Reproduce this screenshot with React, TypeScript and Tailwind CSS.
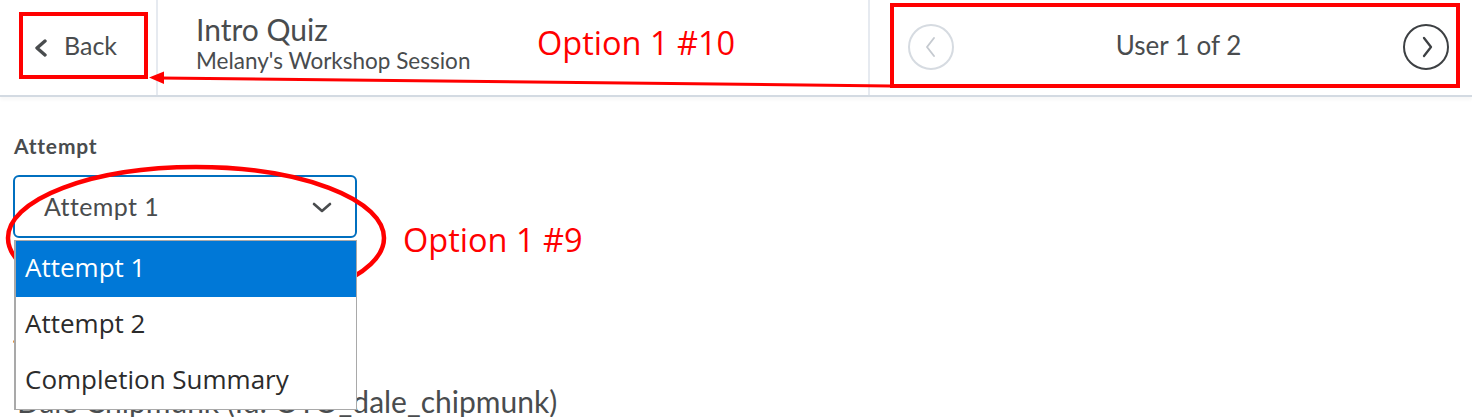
import React from "react";

function Chev({ points, w, h, stroke, className }: { points: string; w: number; h: number; stroke: number; className?: string }) {
  return (
    <svg width={w} height={h} viewBox={`0 0 ${w} ${h}`} className={className} fill="none">
      <polyline points={points} stroke="currentColor" strokeLinecap="round" strokeLinejoin="round" strokeWidth={stroke} />
    </svg>
  );
}

function Annotations() {
  return (
    <>
      <svg className="pointer-events-none absolute left-0 top-0" width="1472" height="417" viewBox="0 0 1472 417">
        <rect x="21" y="14" width="125" height="63" fill="none" stroke="#ff0000" strokeWidth="4" />
        <rect x="892" y="5" width="566" height="81" fill="none" stroke="#ff0000" strokeWidth="4" />
        <line x1="891" y1="86" x2="160" y2="78" stroke="#ff0000" strokeWidth="3" />
        <polygon points="149,77.5 164,71.5 164,84" fill="#ff0000" />
        <ellipse cx="196" cy="238" rx="188" ry="71" fill="none" stroke="#ff0000" strokeWidth="4.5" />
      </svg>
      <div className="pointer-events-none absolute left-[537px] top-[27px] text-[32.5px] leading-none text-[#ff0000] font-['Open_Sans',sans-serif]">
        Option 1 #10
      </div>
      <div className="pointer-events-none absolute left-[403px] top-[224px] text-[32.5px] leading-none text-[#ff0000] font-['Open_Sans',sans-serif]">
        Option 1 #9
      </div>
    </>
  );
}

export default function App() {
  const options = ["Attempt 1", "Attempt 2", "Completion Summary"];
  return (
    <div className="relative h-[417px] w-[1472px] overflow-hidden bg-white font-['Lato',sans-serif] text-[#494c4e]">
      <header className="flex h-[97px] border-b-2 border-[#d3dae2] shadow-[0_3px_3px_rgba(0,0,0,0.03)]">
        <div className="flex w-[158px] items-start gap-[16px] border-r-2 border-[#e6eaf0] pl-[34px] pt-[30px]">
          <Chev points="11,2 3,9 11,16" w={14} h={18} stroke={3.4} className="mt-[9px] text-[#494c4e]" />
          <span className="text-[25px] leading-[30px]">Back</span>
        </div>
        <div className="flex flex-1 flex-col border-r-2 border-[#e6eaf0] pl-[38px] pt-[12px]">
          <span className="text-[30px] leading-[35px]">Intro Quiz</span>
          <span className="mt-[1px] text-[22.5px] leading-[26px]">Melany's Workshop Session</span>
        </div>
        <div className="flex w-[602px] items-center justify-between pb-[1px] pl-[38px] pr-[23px]">
          <div className="flex h-[46px] w-[46px] items-center justify-center rounded-full border-2 border-[#d6dbe1]">
            <Chev points="10,2 3,11 10,20" w={13} h={22} stroke={1.9} className="mr-[2px] text-[#c5cad0]" />
          </div>
          <span className="mb-[4px] text-[26px] leading-[31px]">User 1 of 2</span>
          <div className="flex h-[46px] w-[46px] items-center justify-center rounded-full border-2 border-[#3d4043]">
            <Chev points="3,2 10,11 3,20" w={13} h={22} stroke={2.3} className="ml-[2px] text-[#3d4043]" />
          </div>
        </div>
      </header>

      <main className="flex flex-col px-[13px] pt-[36px]">
        <label className="pl-[1px] text-[21px] font-bold leading-[25px] tracking-[0.8px]">Attempt</label>
        <div className="relative mt-[17px] w-[344px]">
          <div className="flex h-[63px] items-center justify-between rounded-[6px] border-2 border-[#006fbf] pb-[2px] pl-[29px] pr-[23px]">
            <span className="text-[25px] leading-[30px] tracking-[0.4px]">Attempt 1</span>
            <Chev points="2,2 10,9 18,2" w={20} h={11} stroke={2.6} className="mt-[4px] text-[#494c4e]" />
          </div>
          <ul className="absolute left-[1px] top-[65px] z-10 w-[343px] border border-l-2 border-[#a9a9a9] bg-white font-['Open_Sans',sans-serif] text-[26px] text-[#2b2b2b]">
            {options.map((o, i) => (
              <li
                key={o}
                className={`h-[56px] pl-[9px] leading-[53px] ${i === 0 ? "bg-[#0078d7] text-white" : ""}`}
              >
                {o}
              </li>
            ))}
          </ul>
        </div>
        <div className="mt-[102px] h-[3px] w-[3px] rounded-full bg-[#e0892e]" />
        <p className="mt-[40px] whitespace-nowrap pl-[4px] text-[30px] leading-[36px]">Dale Chipmunk (Id: OTO_dale_chipmunk)</p>
      </main>

      <Annotations />
    </div>
  );
}
